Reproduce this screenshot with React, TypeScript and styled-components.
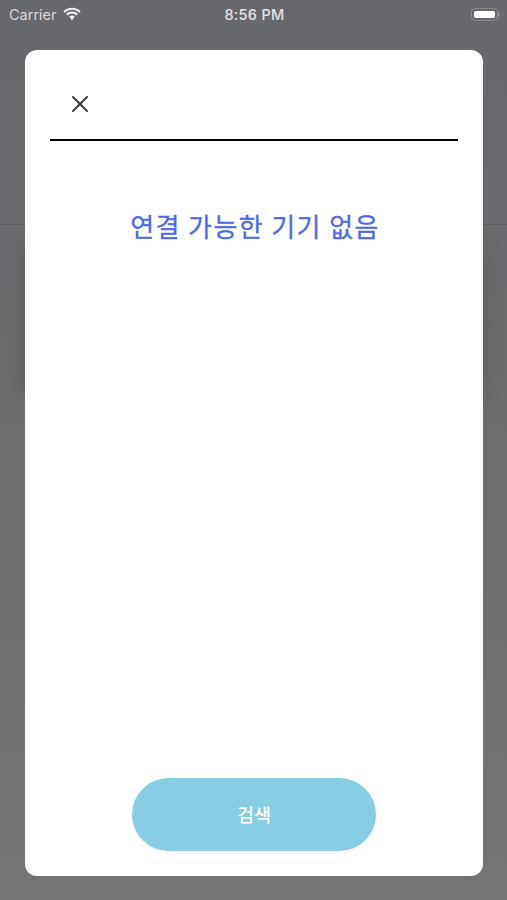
import React from "react";
import styled, { createGlobalStyle } from "styled-components";
import { X } from "lucide-react";

const GlobalStyle = createGlobalStyle`
  html, body {
    margin: 0;
    padding: 0;
    background: #6f7072;
  }
  * {
    box-sizing: border-box;
  }
`;

const Screen = styled.div`
  position: relative;
  width: 507px;
  height: 900px;
  overflow: hidden;
  display: flex;
  flex-direction: column;
  background: linear-gradient(180deg, #67686c 0%, #6b6c6e 45%, #747474 100%);
  font-family: "Liberation Sans", "Noto Sans CJK KR", sans-serif;
`;

const StatusBar = styled.div`
  height: 28px;
  flex-shrink: 0;
  display: grid;
  grid-template-columns: 1fr auto 1fr;
  align-items: center;
  padding: 0 7px 0 9px;
  color: #e4e4e6;
`;

const Carrier = styled.div`
  display: flex;
  align-items: center;
  gap: 5px;
  font-family: "Inter", "Liberation Sans", sans-serif;
  font-size: 14.5px;
  color: #d8d8da;
`;

const Clock = styled.div`
  font-family: "Inter", "Liberation Sans", sans-serif;
  font-size: 14.5px;
  font-weight: 500;
  letter-spacing: 0.3px;
`;

const Battery = styled.div`
  justify-self: end;
  position: relative;
  width: 27px;
  height: 13px;
  padding: 2px;
  border: 1px solid #88898b;
  border-radius: 4px;
  margin-right: 2px;

  &:before {
    content: "";
    display: block;
    height: 100%;
    background: #fff;
    border-radius: 2px;
  }

  &:after {
    content: "";
    position: absolute;
    right: -3px;
    top: 3px;
    width: 2px;
    height: 5px;
    background: #88898b;
    border-radius: 0 2px 2px 0;
  }
`;

const BackHeader = styled.div`
  height: 197px;
  flex-shrink: 0;
  border-bottom: 1px solid #5b5c5e;
`;

const BackCard = styled.div`
  height: 140px;
  margin: 26px 26px 0;
  box-shadow: 0 0 16px rgba(65, 65, 65, 0.5);
`;

const Modal = styled.div`
  position: absolute;
  top: 50px;
  left: 25px;
  width: 458px;
  height: 826px;
  background: #fff;
  border-radius: 12px;
  padding: 0 25px 25px;
  display: flex;
  flex-direction: column;
  align-items: center;
`;

const ModalHeader = styled.div`
  width: 100%;
  height: 91px;
  flex-shrink: 0;
  display: flex;
  align-items: center;
  padding: 18px 0 0 16px;
  border-bottom: 2.5px solid #000;
  color: #3a3a3c;
`;

const Message = styled.div`
  flex: 1;
  padding: 67px 0 0 2px;
  color: #4d6ae8;
  font-family: "Noto Sans CJK KR", sans-serif;
  font-size: 26px;
  font-weight: 400;
  line-height: 36px;
  letter-spacing: 1.4px;
  -webkit-text-stroke: 0.3px #4d6ae8;
`;

const SearchButton = styled.button`
  width: 244px;
  height: 73px;
  border: none;
  padding: 0 0 2px;
  border-radius: 37px;
  background: #87cee4;
  color: #fff;
  font-family: "Noto Sans CJK KR", sans-serif;
  font-size: 18.5px;
  font-weight: 500;
`;

function WifiIcon() {
  return (
    <svg width="20" height="15" viewBox="0 0 19 14" fill="#f2f2f2">
      <path d="M9.5 2.6c2.6 0 5 1 6.8 2.7l1.4-1.5C15.5 1.7 12.6.5 9.5.5S3.5 1.7 1.3 3.8l1.4 1.5C4.500 3.6 6.900 2.600 9.500 2.600z" />
      <path d="M9.500 6.300c1.600 0 3 .6 4.100 1.600l1.500-1.500C13.600 5 11.600 4.200 9.500 4.200S5.400 5 3.900 6.400l1.500 1.500c1.100-1 2.500-1.600 4.100-1.600z" />
      <path d="M9.500 8c-1 0-1.900.4-2.600 1l2.600 3.800L12.100 9c-.7-.6-1.600-1-2.600-1z" />
    </svg>
  );
}

export default function App() {
  return (
    <Screen>
      <GlobalStyle />
      <StatusBar>
        <Carrier>
          Carrier
          <WifiIcon />
        </Carrier>
        <Clock>8:56 PM</Clock>
        <Battery />
      </StatusBar>
      <BackHeader />
      <BackCard />
      <Modal>
        <ModalHeader>
          <X size={28} strokeWidth={1.7} />
        </ModalHeader>
        <Message>연결 가능한 기기 없음</Message>
        <SearchButton>검색</SearchButton>
      </Modal>
    </Screen>
  );
}
